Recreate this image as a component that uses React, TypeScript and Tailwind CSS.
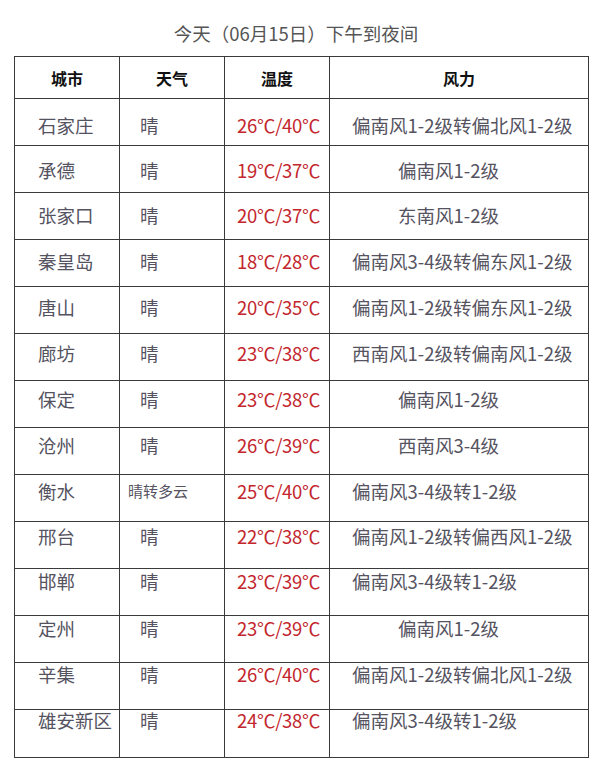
import React from 'react';

type Row = {
    city: string;
    weather: string;
    temp: string;
    wind: string;
    short?: boolean;
};

const rows: Row[] = [
    { city: '石家庄', weather: '晴', temp: '26℃/40℃', wind: '偏南风1-2级转偏北风1-2级' },
    { city: '承德', weather: '晴', temp: '19℃/37℃', wind: '偏南风1-2级', short: true },
    { city: '张家口', weather: '晴', temp: '20℃/37℃', wind: '东南风1-2级', short: true },
    { city: '秦皇岛', weather: '晴', temp: '18℃/28℃', wind: '偏南风3-4级转偏东风1-2级' },
    { city: '唐山', weather: '晴', temp: '20℃/35℃', wind: '偏南风1-2级转偏东风1-2级' },
    { city: '廊坊', weather: '晴', temp: '23℃/38℃', wind: '西南风1-2级转偏南风1-2级' },
    { city: '保定', weather: '晴', temp: '23℃/38℃', wind: '偏南风1-2级', short: true },
    { city: '沧州', weather: '晴', temp: '26℃/39℃', wind: '西南风3-4级', short: true },
    { city: '衡水', weather: '晴转多云', temp: '25℃/40℃', wind: '偏南风3-4级转1-2级' },
    { city: '邢台', weather: '晴', temp: '22℃/38℃', wind: '偏南风1-2级转偏西风1-2级' },
    { city: '邯郸', weather: '晴', temp: '23℃/39℃', wind: '偏南风3-4级转1-2级' },
    { city: '定州', weather: '晴', temp: '23℃/39℃', wind: '偏南风1-2级', short: true },
    { city: '辛集', weather: '晴', temp: '26℃/40℃', wind: '偏南风1-2级转偏北风1-2级' },
    { city: '雄安新区', weather: '晴', temp: '24℃/38℃', wind: '偏南风3-4级转1-2级' },
];

// text sits a little lower in the first rows and drifts up toward the bottom
const offsets = [16, 14, 12, 11, 10, 9, 8, 7, 6, 4, 2, 2, 1, 0];

const cols = 'grid grid-cols-[105px_105px_105px_1fr]';

const App: React.FC = () => {
    return (
        <div
            className="w-[600px] h-[775px] bg-white pt-[21px]"
            style={{ fontFamily: '"Noto Sans CJK SC", "Noto Sans", sans-serif' }}
        >
            <h1 className="text-center text-[18.5px] leading-6 text-[#555] font-normal pr-[8px]">
                今天（06月15日）下午到夜间
            </h1>
            <div className="mt-[11px] ml-[14px] w-[575px] border border-[#3a3a3a]">
                <div className={`${cols} h-[42px] border-b border-[#3a3a3a] text-[16px] font-bold text-[#111]`}>
                    <div className="flex items-center justify-center border-r border-[#3a3a3a]">城市</div>
                    <div className="flex items-center justify-center border-r border-[#3a3a3a]">天气</div>
                    <div className="flex items-center justify-center border-r border-[#3a3a3a]">温度</div>
                    <div className="flex items-center justify-center">风力</div>
                </div>
                {rows.map((r, i) => (
                    <div
                        key={r.city}
                        className={`${cols} h-[47px] text-[18.5px] leading-5 text-[#55535f] ${i < rows.length - 1 ? 'border-b border-[#3a3a3a]' : ''}`}
                    >
                        <div className="pl-[23px] border-r border-[#3a3a3a] whitespace-nowrap" style={{ paddingTop: offsets[i] }}>
                            {r.city}
                        </div>
                        <div
                            className={`border-r border-[#3a3a3a] whitespace-nowrap ${r.weather.length > 1 ? 'pl-[8px] text-[15px]' : 'pl-[20px]'}`}
                            style={{ paddingTop: offsets[i] }}
                        >
                            {r.weather}
                        </div>
                        <div className="pl-[12px] border-r border-[#3a3a3a] text-[#c3262d] whitespace-nowrap tracking-[-0.3px]" style={{ paddingTop: offsets[i] }}>
                            {r.temp}
                        </div>
                        <div
                            className={`whitespace-nowrap ${r.short ? 'pl-[68px]' : 'pl-[22px]'}`}
                            style={{ paddingTop: offsets[i] }}
                        >
                            {r.wind}
                        </div>
                    </div>
                ))}
            </div>
        </div>
    );
};

export default App;
